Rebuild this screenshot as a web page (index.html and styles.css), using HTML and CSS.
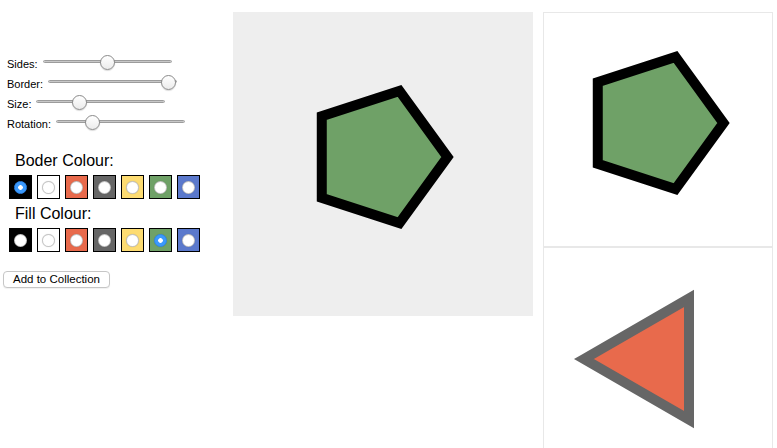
FILE: index.html
```html
<!DOCTYPE html>
<html>
<head>
<meta charset="utf-8">
<title>Shape Builder</title>
<link rel="stylesheet" href="styles.css">
</head>
<body>
<div class="app">
  <div class="controls">
    <div class="row"><span class="lbl">Sides:</span><input class="slider" type="range" min="3" max="7" value="5"></div>
    <div class="row"><span class="lbl">Border:</span><input class="slider" type="range" min="0" max="10" value="10"></div>
    <div class="row"><span class="lbl">Size:</span><input class="slider" type="range" min="20" max="180" value="70"></div>
    <div class="row"><span class="lbl">Rotation:</span><input class="slider" type="range" min="0" max="360" value="90"></div>

    <div class="heading">Boder Colour:</div>
    <div class="swatches">
      <label class="swatch c-black"><input type="radio" name="border" checked></label>
      <label class="swatch c-white"><input type="radio" name="border"></label>
      <label class="swatch c-red"><input type="radio" name="border"></label>
      <label class="swatch c-gray"><input type="radio" name="border"></label>
      <label class="swatch c-yellow"><input type="radio" name="border"></label>
      <label class="swatch c-green"><input type="radio" name="border"></label>
      <label class="swatch c-blue"><input type="radio" name="border"></label>
    </div>

    <div class="heading heading-2">Fill Colour:</div>
    <div class="swatches">
      <label class="swatch c-black"><input type="radio" name="fill"></label>
      <label class="swatch c-white"><input type="radio" name="fill"></label>
      <label class="swatch c-red"><input type="radio" name="fill"></label>
      <label class="swatch c-gray"><input type="radio" name="fill"></label>
      <label class="swatch c-yellow"><input type="radio" name="fill"></label>
      <label class="swatch c-green"><input type="radio" name="fill" checked></label>
      <label class="swatch c-blue"><input type="radio" name="fill"></label>
    </div>

    <button class="add-btn" type="button">Add to Collection</button>
  </div>

  <div class="preview">
    <svg class="preview-svg" width="300" height="300" viewBox="0 0 300 300">
      <polygon points="214.5,145 166.48,211.1 88.77,185.85 88.77,104.15 166.48,78.9" fill="#6fa167" stroke="#000" stroke-width="10" stroke-linejoin="miter"/>
    </svg>
  </div>

  <div class="collection">
    <div class="card">
      <svg width="228" height="233" viewBox="0 0 228 233">
        <polygon points="179.5,110 131.48,176.1 53.77,150.85 53.77,69.15 131.48,43.9" fill="#6fa167" stroke="#000" stroke-width="10" stroke-linejoin="miter"/>
      </svg>
    </div>
    <div class="card">
      <svg width="228" height="233" viewBox="0 0 228 233">
        <polygon points="40,111 145,50.38 145,171.62" fill="#e86a4c" stroke="#666" stroke-width="10" stroke-linejoin="miter"/>
      </svg>
    </div>
  </div>
</div>
</body>
</html>
```

FILE: styles.css
```css
html, body {
  margin: 0;
  padding: 0;
  overflow: hidden;
  background: #fff;
}

body {
  font-family: "Liberation Sans", Arial, sans-serif;
  color: #000;
}

.app {
  display: flex;
  align-items: flex-start;
  padding-top: 12px;
}

.controls {
  width: 233px;
  flex: none;
  box-sizing: border-box;
  padding: 40px 0 0 3px;
  display: flex;
  flex-direction: column;
  align-items: flex-start;
}

.row {
  display: flex;
  align-items: flex-start;
  height: 20px;
  margin-left: 4px;
}

.lbl {
  font-size: 11px;
  line-height: 13px;
  padding-top: 6px;
  margin-right: 5px;
}

.slider {
  -webkit-appearance: none;
  appearance: none;
  width: 129px;
  height: 16px;
  margin: 1px 0 0 0;
  padding: 0;
  background: transparent;
}

.slider::-webkit-slider-runnable-track {
  height: 3px;
  border: 1px solid #9c9c9c;
  border-radius: 3px;
  background: linear-gradient(#b8b8b8, #d8d8d8);
}

.slider::-webkit-slider-thumb {
  -webkit-appearance: none;
  appearance: none;
  box-sizing: border-box;
  width: 15px;
  height: 15px;
  margin-top: -6px;
  border-radius: 50%;
  border: 1px solid #8a8a8a;
  background: linear-gradient(#ffffff, #ececec);
  box-shadow: 0 1px 1px rgba(0, 0, 0, 0.15);
}

.heading {
  font-size: 16px;
  line-height: 18px;
  margin: 20px 0 0 12px;
}

.heading-2 {
  margin-top: 6px;
}

.swatches {
  display: flex;
  gap: 5px;
  margin: 5px 0 0 6px;
}

.swatch {
  box-sizing: border-box;
  width: 23px;
  height: 24px;
  border: 1px solid #000;
  display: flex;
  align-items: center;
  justify-content: center;
}

.swatch input {
  -webkit-appearance: none;
  appearance: none;
  box-sizing: border-box;
  width: 13px;
  height: 13px;
  margin: 0;
  border-radius: 50%;
  background: #fff;
  border: 1px solid rgba(0, 0, 0, 0.22);
  box-shadow: 0 0 1px rgba(0, 0, 0, 0.2);
}

.swatch input:checked {
  border-color: #2f86e8;
  background: radial-gradient(circle, #fff 0 2px, #3b99fc 2.6px);
}

.c-black { background: #000; }
.c-white { background: #fff; }
.c-red { background: #e86a4c; }
.c-gray { background: #666; }
.c-yellow { background: #fddc72; }
.c-green { background: #6fa167; }
.c-blue { background: #5b79cc; }

.add-btn {
  -webkit-appearance: none;
  appearance: none;
  margin-top: 19px;
  height: 17px;
  padding: 0 9px;
  font-family: "Liberation Sans", Arial, sans-serif;
  font-size: 11.5px;
  line-height: 15px;
  color: #000;
  background: #fff;
  border: 1px solid #c6c6c6;
  border-radius: 4px;
  box-shadow: 0 1px 1px rgba(0, 0, 0, 0.06);
}

.preview {
  flex: none;
  width: 300px;
  height: 304px;
  background: #eeeeee;
  margin-right: 10px;
}

.preview-svg {
  display: block;
}

.collection {
  flex: none;
  width: 230px;
  display: flex;
  flex-direction: column;
}

.card {
  box-sizing: border-box;
  width: 230px;
  height: 235px;
  border: 1px solid #e8e8e8;
}

.card svg {
  display: block;
}
```
